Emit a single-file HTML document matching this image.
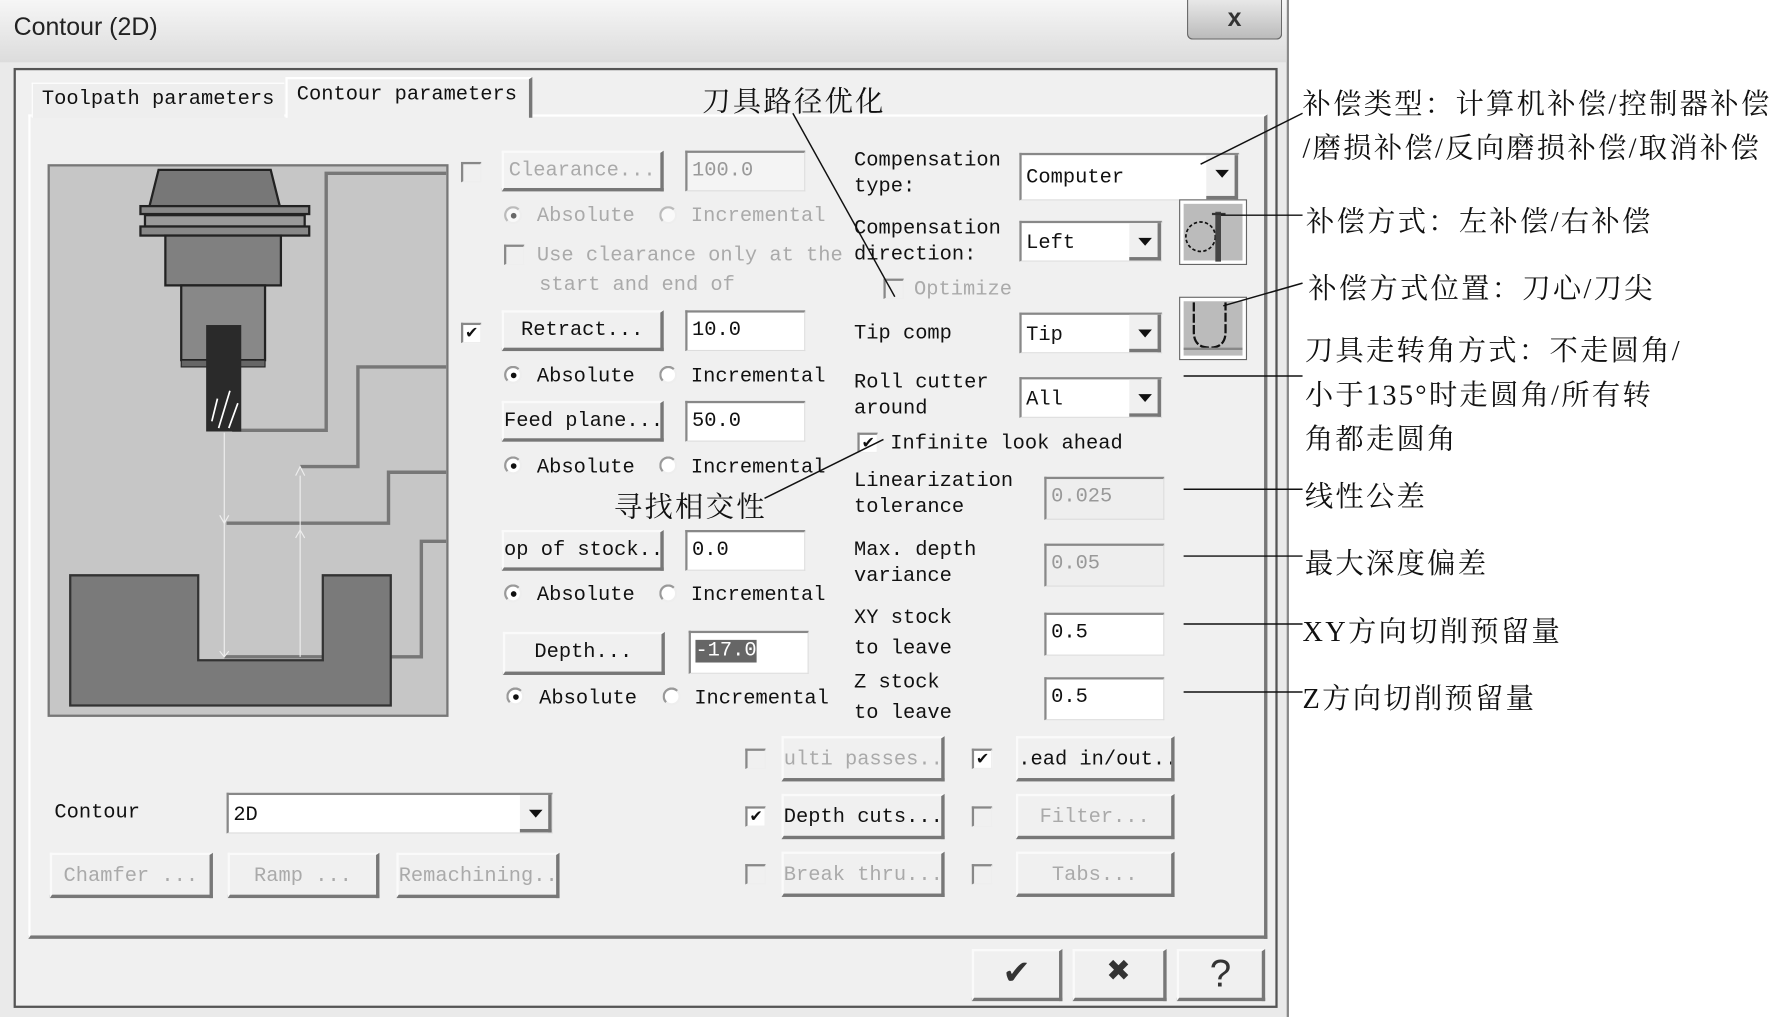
<!DOCTYPE html>
<html><head><meta charset="utf-8"><style>
html,body{margin:0;padding:0;background:#fff;width:1776px;height:1017px;overflow:hidden}
#w{position:absolute;left:0;top:0;width:1568px;height:898px;transform:scale(1.13265,1.1325);transform-origin:0 0;font-family:"Liberation Mono",monospace;font-size:18px;color:#111}
.a{position:absolute;white-space:nowrap}
.t{padding-top:2px}
.g{color:#aaa}
.btn{position:absolute;background:#f0f0f0;border-top:2px solid #fafafa;border-left:2px solid #fafafa;border-right:3px solid #777;border-bottom:3px solid #777;box-sizing:border-box;text-align:center;line-height:32px;white-space:nowrap;overflow:hidden}
.ed{position:absolute;background:#fff;border-top:2px solid #888;border-left:2px solid #888;border-right:1px solid #ddd;border-bottom:1px solid #ddd;box-sizing:border-box;padding-left:4px;line-height:32px}
.ed.dis{background:#eee;color:#999}
.cb{position:absolute;width:18px;height:18px;border-top:2px solid #888;border-left:2px solid #888;border-right:1px solid #eee;border-bottom:1px solid #eee;background:#fff;box-sizing:border-box;font-size:16px;line-height:15px;text-align:center;font-weight:bold}
.cb.dis{background:#f0f0f0}
.rd{position:absolute;width:16px;height:16px;border-radius:50%;border:2px solid #999;border-right-color:#eee;border-bottom-color:#eee;background:#fff;box-sizing:border-box}
.rd.on::after{content:"";position:absolute;left:4px;top:4px;width:5px;height:5px;border-radius:50%;background:#111}
.dd{position:absolute;background:#fff;border-top:2px solid #888;border-left:2px solid #888;border-right:1px solid #ddd;border-bottom:1px solid #ddd;box-sizing:border-box;padding-left:4px;line-height:36px}
.dd i{position:absolute;right:0;top:0;bottom:0;width:28px;background:#f0f0f0;border-right:3px solid #777;border-bottom:3px solid #777;box-sizing:border-box}
.dd i::after{content:"";position:absolute;left:8px;top:13px;border-left:6px solid transparent;border-right:6px solid transparent;border-top:7px solid #111}
.cn{position:absolute;font-family:"Liberation Serif","Noto Serif CJK SC",serif;font-size:25px;color:#111;white-space:nowrap;letter-spacing:2px}
</style></head><body><div id="w">
<div class="a" style="left:0;top:0;width:1136px;height:898px;background:#eaeaea;border-right:2px solid #888"></div>
<div class="a" style="left:0;top:0;width:1136px;height:55px;background:linear-gradient(#f6f6f6,#dcdcdc)"></div>
<div class="a" style="left:12px;top:11px;font-family:'Liberation Sans',sans-serif;font-size:22px;color:#222">Contour (2D)</div>
<div class="a" style="left:1048px;top:0;width:82px;height:34px;background:linear-gradient(#e8e8e8,#bbb);border:1px solid #666;border-top:none;border-radius:0 0 5px 5px;text-align:center;font-family:'Liberation Sans',sans-serif;font-weight:bold;font-size:22px;line-height:32px;color:#333">x</div>
<div class="a" style="left:12px;top:60px;width:1116px;height:830px;background:#f0f0f0;border:2px solid #555;box-sizing:border-box"></div>
<div class="a" style="left:25px;top:101px;width:1094px;height:728px;border-left:2px solid #fff;border-top:2px solid #fff;border-right:3px solid #777;border-bottom:3px solid #777;box-sizing:border-box"></div>
<div class="a" style="left:28px;top:73px;width:222px;height:30px;border-top:1px solid #fff;border-left:1px solid #fff;background:#eee"></div>
<div class="a t" style="left:37px;top:76px">Toolpath parameters</div>
<div class="a" style="left:252px;top:68px;width:218px;height:36px;background:#f0f0f0;border-top:2px solid #fff;border-left:2px solid #fff;border-right:3px solid #777;box-sizing:border-box"></div>
<div class="a t" style="left:262px;top:72px">Contour parameters</div>
<div class="a" style="left:42px;top:145px;width:354px;height:488px;border:2px solid #777;box-sizing:border-box;background:#c6c6c6">
<svg width="350" height="484" viewBox="44 147 350 484" style="position:absolute;left:0;top:0">
<g fill="none" stroke="#777" stroke-width="3">
<path d="M205 380 H288 V153 H394"/><path d="M265 412 H316 V324 H394"/><path d="M200 462 H343 V417 H394"/><path d="M198 580 H372 V478 H394"/>
</g>
<path d="M62 508 H175 V583 H285 V508 H345 V623 H62Z" fill="#7a7a7a" stroke="#333" stroke-width="2"/>
<path d="M140 150 L132 182 H247 L239 150Z" fill="#777" stroke="#222" stroke-width="2"/>
<rect x="124" y="182" width="149" height="7" fill="#888" stroke="#222" stroke-width="2"/>
<rect x="128" y="190" width="141" height="10" fill="#999" stroke="#222" stroke-width="2"/>
<rect x="124" y="200" width="149" height="8" fill="#888" stroke="#222" stroke-width="2"/>
<rect x="146" y="208" width="102" height="44" fill="#808080" stroke="#222" stroke-width="2"/>
<rect x="160" y="252" width="74" height="66" fill="#888" stroke="#222" stroke-width="2"/>
<rect x="160" y="318" width="74" height="6" fill="#666" stroke="#222" stroke-width="1"/>
<rect x="184" y="325" width="28" height="35" fill="#333"/>
<rect x="182" y="287" width="31" height="94" fill="#2a2a2a" transform="translate(0,0)"/>
<path d="M187 372 L192 352 M193 378 L203 345 M202 378 L210 356" stroke="#fff" stroke-width="1.5"/>
<path d="M198 382 V580 M265 420 V580" stroke="#eee" stroke-width="1"/>
<path d="M194 455 L198 462 L202 455 M261 420 L265 412 L269 420 M194 575 L198 580 L202 575 M261 475 L265 468 L269 475" stroke="#eee" fill="none"/>
</svg></div>
<div class="cb dis" style="left:407px;top:143px"></div>
<div class="btn g" style="left:443px;top:133px;width:143px;height:36px;background:#f2f2f2">Clearance...</div>
<div class="ed dis" style="left:605px;top:133px;width:106px;height:36px;background:#f4f4f4">100.0</div>
<div class="rd on" style="left:445px;top:182px;opacity:.6"></div><div class="a g t" style="left:474px;top:179px">Absolute</div>
<div class="rd" style="left:582px;top:182px;opacity:.6"></div><div class="a g t" style="left:610px;top:179px">Incremental</div>
<div class="cb dis" style="left:445px;top:216px"></div><div class="a g t" style="left:474px;top:214px">Use clearance only at the</div>
<div class="a g t" style="left:476px;top:240px">start and end of</div>
<div class="cb" style="left:407px;top:285px">✔</div>
<div class="btn" style="left:443px;top:274px;width:143px;height:36px">Retract...</div>
<div class="ed" style="left:605px;top:274px;width:106px;height:36px">10.0</div>
<div class="rd on" style="left:445px;top:323px"></div><div class="a t" style="left:474px;top:321px">Absolute</div>
<div class="rd" style="left:582px;top:323px"></div><div class="a t" style="left:610px;top:321px">Incremental</div>
<div class="btn" style="left:443px;top:354px;width:143px;height:36px">Feed plane...</div>
<div class="ed" style="left:605px;top:354px;width:106px;height:36px">50.0</div>
<div class="rd on" style="left:445px;top:403px"></div><div class="a t" style="left:474px;top:401px">Absolute</div>
<div class="rd" style="left:582px;top:403px"></div><div class="a t" style="left:610px;top:401px">Incremental</div>
<div class="btn" style="left:443px;top:468px;width:143px;height:36px">op of stock..</div>
<div class="ed" style="left:605px;top:468px;width:106px;height:36px">0.0</div>
<div class="rd on" style="left:445px;top:516px"></div><div class="a t" style="left:474px;top:514px">Absolute</div>
<div class="rd" style="left:582px;top:516px"></div><div class="a t" style="left:610px;top:514px">Incremental</div>
<div class="btn" style="left:444px;top:558px;width:143px;height:38px">Depth...</div>
<div class="ed" style="left:608px;top:557px;width:106px;height:38px"><span style="background:#666;color:#fff">-17.0</span></div>
<div class="rd on" style="left:447px;top:607px"></div><div class="a t" style="left:476px;top:605px">Absolute</div>
<div class="rd" style="left:585px;top:607px"></div><div class="a t" style="left:613px;top:605px">Incremental</div>
<div class="a t" style="left:754px;top:129px;line-height:23px">Compensation<br>type:</div>
<div class="dd" style="left:900px;top:135px;width:194px;height:42px;line-height:40px">Computer<i></i></div>
<div class="a t" style="left:754px;top:189px;line-height:23px">Compensation<br>direction:</div>
<div class="dd" style="left:900px;top:195px;width:126px;height:36px">Left<i></i></div>
<div class="a" style="left:1041px;top:176px;width:60px;height:58px;border:1px solid #666;background:#fff;box-sizing:border-box">
<div class="a" style="left:3px;top:3px;width:52px;height:50px;background:#bbb"></div>
<svg class="a" style="left:0;top:0" width="60" height="58"><circle cx="18" cy="32" r="13" fill="none" stroke="#111" stroke-width="1.5" stroke-dasharray="3 2"/><rect x="31" y="10" width="5" height="44" fill="#444"/><path d="M28 12 H40" stroke="#333" stroke-width="2"/></svg></div>
<div class="cb dis" style="left:780px;top:246px"></div><div class="a g t" style="left:807px;top:244px">Optimize</div>
<div class="a t" style="left:754px;top:283px">Tip comp</div>
<div class="dd" style="left:900px;top:276px;width:126px;height:36px">Tip<i></i></div>
<div class="a" style="left:1041px;top:262px;width:60px;height:56px;border:1px solid #666;background:#fff;box-sizing:border-box">
<div class="a" style="left:3px;top:3px;width:52px;height:48px;background:#bbb"></div>
<svg class="a" style="left:0;top:0" width="60" height="56"><path d="M12 4 V30 Q12 44 26 44 Q40 44 40 30 V4" fill="none" stroke="#111" stroke-width="2" stroke-dasharray="8 2"/><path d="M3 45 H55" stroke="#888" stroke-width="2"/></svg></div>
<div class="a t" style="left:754px;top:325px;line-height:23px">Roll cutter<br>around</div>
<div class="dd" style="left:900px;top:333px;width:126px;height:36px">All<i></i></div>
<div class="cb" style="left:757px;top:382px">✔</div><div class="a t" style="left:786px;top:380px">Infinite look ahead</div>
<div class="a t" style="left:754px;top:412px;line-height:23px">Linearization<br>tolerance</div>
<div class="ed dis" style="left:922px;top:421px;width:106px;height:38px">0.025</div>
<div class="a t" style="left:754px;top:473px;line-height:23px">Max. depth<br>variance</div>
<div class="ed dis" style="left:922px;top:480px;width:106px;height:38px">0.05</div>
<div class="a t" style="left:754px;top:531px;line-height:27px">XY stock<br>to leave</div>
<div class="ed" style="left:922px;top:541px;width:106px;height:38px">0.5</div>
<div class="a t" style="left:754px;top:588px;line-height:27px">Z stock<br>to leave</div>
<div class="ed" style="left:922px;top:598px;width:106px;height:38px">0.5</div>
<div class="cb dis" style="left:658px;top:661px"></div>
<div class="btn g" style="left:690px;top:650px;width:144px;height:40px;line-height:38px">ulti passes..</div>
<div class="cb" style="left:858px;top:661px">✔</div>
<div class="btn" style="left:897px;top:650px;width:140px;height:40px;line-height:38px">.ead in/out..</div>
<div class="cb" style="left:658px;top:712px">✔</div>
<div class="btn" style="left:690px;top:701px;width:144px;height:40px;line-height:38px">Depth cuts...</div>
<div class="cb dis" style="left:858px;top:712px"></div>
<div class="btn g" style="left:897px;top:701px;width:140px;height:40px;line-height:38px">Filter...</div>
<div class="cb dis" style="left:658px;top:763px"></div>
<div class="btn g" style="left:690px;top:752px;width:144px;height:40px;line-height:38px">Break thru...</div>
<div class="cb dis" style="left:858px;top:763px"></div>
<div class="btn g" style="left:897px;top:752px;width:140px;height:40px;line-height:38px">Tabs...</div>
<div class="a t" style="left:48px;top:706px">Contour</div>
<div class="dd" style="left:200px;top:700px;width:288px;height:36px">2D<i></i></div>
<div class="btn g" style="left:44px;top:753px;width:144px;height:40px;line-height:38px">Chamfer ...</div>
<div class="btn g" style="left:201px;top:753px;width:134px;height:40px;line-height:38px">Ramp ...</div>
<div class="btn g" style="left:350px;top:753px;width:144px;height:40px;line-height:38px">Remachining..</div>
<div class="btn" style="left:858px;top:838px;width:80px;height:46px;font-size:34px;line-height:40px;color:#333">✔</div>
<div class="btn" style="left:947px;top:838px;width:83px;height:46px;font-size:34px;line-height:40px;color:#333">✖</div>
<div class="btn" style="left:1039px;top:838px;width:78px;height:46px;font-size:34px;line-height:40px;color:#333;font-family:'Liberation Sans',sans-serif">?</div>
<svg class="a" style="left:0;top:0" width="1568" height="898"><g stroke="#111" stroke-width="1.3">
<path d="M700 100 L790 262"/><path d="M1060 145 L1150 100"/><path d="M1078 190 H1150"/><path d="M1080 270 L1150 250"/>
<path d="M1045 332 H1150"/><path d="M1045 432 H1150"/><path d="M1045 491 H1150"/><path d="M1045 551 H1150"/><path d="M1045 611 H1150"/>
<path d="M675 440 L780 388"/></g></svg>
<div class="cn" style="left:620px;top:70px">刀具路径优化</div>
<div class="cn" style="left:542px;top:428px">寻找相交性</div>
<div class="cn" style="left:1150px;top:72px">补偿类型：计算机补偿/控制器补偿</div>
<div class="cn" style="left:1150px;top:111px">/磨损补偿/反向磨损补偿/取消补偿</div>
<div class="cn" style="left:1153px;top:176px">补偿方式：左补偿/右补偿</div>
<div class="cn" style="left:1155px;top:235px">补偿方式位置：刀心/刀尖</div>
<div class="cn" style="left:1152px;top:290px">刀具走转角方式：不走圆角/</div>
<div class="cn" style="left:1152px;top:329px">小于135°时走圆角/所有转</div>
<div class="cn" style="left:1152px;top:368px">角都走圆角</div>
<div class="cn" style="left:1152px;top:419px">线性公差</div>
<div class="cn" style="left:1152px;top:478px">最大深度偏差</div>
<div class="cn" style="left:1150px;top:538px">XY方向切削预留量</div>
<div class="cn" style="left:1150px;top:597px">Z方向切削预留量</div>
</div></body></html>
